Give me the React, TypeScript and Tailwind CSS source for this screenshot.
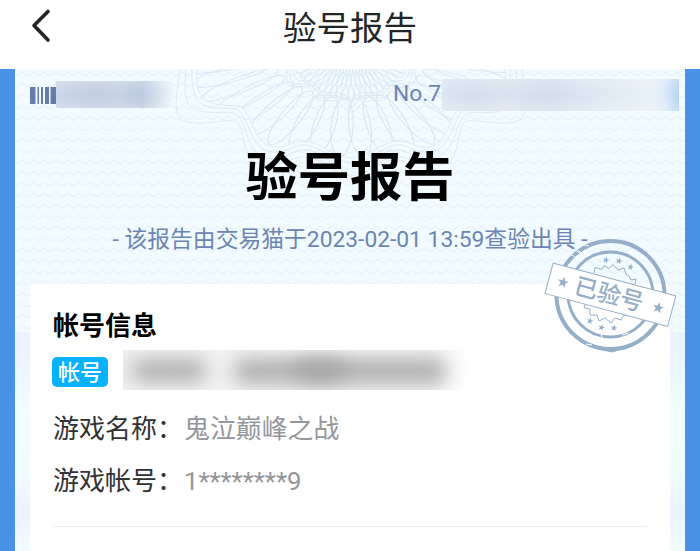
const STAR = "M0 -5 L1.3 -1.6 L4.8 -1.5 L2 0.7 L3 4.1 L0 2.1 L-3 4.1 L-2 0.7 L-4.8 -1.5 L-1.3 -1.6 Z";

const innerPetals = Array.from({ length: 60 }, (_, i) => i * 6);
const outerPetals = Array.from({ length: 45 }, (_, i) => i * 8);

// left half of the border lines, mirrored at x = 351
const borderLines = [
  "M197 69 C195 88 200 98 207 101 C218 107 233 104 241 107 C252 113 254 146 275 147 C288 148 292 140 304 141 C322 142 330 156 351 158",
  "M192 69 C191 92 196 103 207 106 C218 110 230 107 238 110 C249 117 250 150 272 152 C288 154 294 143 306 145 C324 148 330 162 351 163",
  "M186 69 C184 92 184 106 197 110 C211 115 227 110 236 114 C246 120 246 152 266 158 C284 163 294 148 308 150 C324 153 332 168 351 169",
  "M180 69 C178 88 172 110 181 119 C193 128 222 119 235 121 C244 123 242 148 251 160 C270 175 293 154 309 157 C325 160 332 174 351 176",
  "M287 69 C286 80 287 85 294 86 C304 88 309 83 314 94 C319 102 330 96 337 98 C344 99 346 105 351 106",
  "M290 69 C289 78 291 83 298 84 C308 84 311 83 317 92 C322 99 332 93 339 96 C346 98 347 102 351 103",
  "M293 69 C293 76 295 80 302 81 C310 81 314 80 319 89 C325 96 334 91 341 93 C347 95 348 99 351 100",
  "M313 97 C320 104 330 99 336 101 C343 104 344 111 351 112",
];

const Guilloche = () => {
  return (
    <svg className="absolute inset-0" width="670" height="482" viewBox="15 69 670 482" fill="none">
      <defs>
        <pattern id="waves" x="15" y="69" width="11.5" height="11" patternUnits="userSpaceOnUse">
          <path d="M-1 5.5 C1 7 2 7 4 5 C6 2.8 7 3 9 5 C10.5 6.3 11 6.3 12.5 5" stroke="#e3eaf6" strokeWidth="0.9" />
        </pattern>
        <clipPath id="mandala">
          <path d="M197 69 C195 88 200 98 207 101 C218 107 233 104 241 107 C252 113 254 146 275 147 C288 148 292 140 304 141 C322 142 330 156 351 158 C372 156 380 142 398 141 C410 140 414 148 427 147 C448 146 450 113 461 107 C469 104 484 107 495 101 C502 98 507 88 505 69 Z" />
        </clipPath>
      </defs>
      <rect x="15" y="69" width="670" height="263" fill="url(#waves)" />
      <g stroke="#c9dce9" strokeWidth="0.8" opacity="0.65">
        <g clipPath="url(#mandala)">
          <g transform="translate(351 42) scale(1.5 1)">
            {outerPetals.map((a) => (
              <ellipse key={a} cx="0" cy="84" rx="7.5" ry="29" transform={`rotate(${a}) skewX(12)`} />
            ))}
          </g>
          <g transform="translate(351 45) scale(1.15 1)">
            {innerPetals.map((a) => (
              <ellipse key={a} cx="0" cy="30" rx="4" ry="25" transform={`rotate(${a})`} />
            ))}
          </g>
        </g>
        {borderLines.map((d) => (
          <g key={d}>
            <path d={d} />
            <path d={d} transform="translate(702 0) scale(-1 1)" />
          </g>
        ))}
      </g>
    </svg>
  );
};

const Stamp = () => {
  return (
    <svg className="absolute left-[525px] top-[164px]" width="140" height="126" viewBox="540 233 140 126" fill="none">
      <g stroke="#95afc9">
        <circle cx="610.5" cy="295" r="54" strokeWidth="4" />
        <path d="M584 343 Q610 356 638 343 L625 349 L619 350 L612 352 L603 350 L594 348 Z" fill="#95afc9" strokeWidth="1" />
        <circle cx="610.5" cy="294.5" r="42.5" strokeWidth="3" />
        <g strokeWidth="1">
          <path d="M594 273 L595 267.5 L602 269.5 L604 265.5 L609 268.5 L613 264.5 L618 270 L624 268 L626 274 L629 276 L631 280 L636 279 L635 284" />
          <path d="M585 304 L584 308 L590 309 L590 315 L597 315 L599 321 L605 318 L611 323 L615 318 L621 320 L624 315 L627 316" />
        </g>
      </g>
      <g fill="#95afc9">
        {[[606, 260], [619, 261], [630.5, 267], [590, 321], [601.5, 327.5], [614, 328]].map(([x, y]) => (
          <path key={x} d={STAR} transform={`translate(${x} ${y}) rotate(15) scale(0.7)`} />
        ))}
      </g>
      <g stroke="#eff8fd" strokeWidth="1">
        <path d="M570 254 L575 257 M573 249 L580 253 M578 250 L581 253 M584 245 L589 246" />
      </g>
      <g stroke="#fff" strokeWidth="1">
        <path d="M601 334 L603 340 M586 344 L592 345 M622 335 L629 333" />
      </g>
      <g transform="rotate(15 610.5 294.5)">
        <rect x="547" y="279" width="127" height="31.5" fill="#fff" stroke="#95afc9" />
        <path d={STAR} fill="#95afc9" transform="translate(561.5 295) scale(1.15)" />
        <path d={STAR} fill="#95afc9" transform="translate(660 295) scale(1.15)" />
        <text
          x="609"
          y="303"
          textAnchor="middle"
          fill="#95afc9"
          className="font-['Noto_Sans_CJK_SC',sans-serif] text-[23.5px] font-medium"
        >
          已验号
        </text>
      </g>
    </svg>
  );
};

const App = () => {
  return (
    <div className="h-[551px] w-[700px] overflow-hidden bg-white font-[Roboto,'Noto_Sans_CJK_SC',sans-serif]">
      <header className="grid h-[69px] grid-cols-[1fr_auto_1fr] items-start">
        <svg className="ml-7 mt-2" width="26" height="36" viewBox="0 0 26 36" fill="none">
          <path d="M20 3.5 L6 17.5 L20 32" stroke="#222426" strokeWidth="3.6" strokeLinecap="round" strokeLinejoin="round" />
        </svg>
        <h1 className="mt-[5px] text-[33.5px] leading-[48px] text-[#222426]">验号报告</h1>
      </header>

      <div className="h-[482px] bg-[#4a92e8] px-[15px]">
        <div className="relative flex h-full flex-col bg-[#f2fbff]">
          <div className="absolute inset-x-0 bottom-0 h-[219px] bg-[linear-gradient(#eaf2ff,#ebf4ff_12%,#f1fdff_35%,#f1fcff_65%,#ebf2ff_82%,#f2fdff)]" />
          <Guilloche />

          <div className="relative flex h-[42px] items-start pl-[15px]">
            <svg className="mt-[18px]" width="26" height="17" fill="#667cad">
              <rect width="5.5" height="17" />
              <rect x="7.5" width="1.5" height="17" />
              <rect x="11" width="2" height="17" />
              <rect x="15" width="4" height="17" />
              <rect x="20.5" width="5.5" height="17" />
            </svg>
            <div className="mt-3 h-[27px] w-[117px] bg-[linear-gradient(#ffffff33,transparent_40%,transparent_65%,#ffffff33),linear-gradient(90deg,#cad7e8,#c3cfe2_30%,#c5d2e4_55%,#bdcbe1_74%,#d0ddeb_85%,#edf7fc)]" />
            <span className="ml-[220px] mt-2.5 w-[49px] text-[22.8px] leading-[30px] text-[#6d83b1]">No.7</span>
            <div className="mt-2.5 h-8 w-[237px] bg-[linear-gradient(#ffffff33,transparent_45%,transparent_55%,#ffffff33),linear-gradient(90deg,#dce5f0,#d6e0ed_13%,#dbe4ee_28%,#d4dfec_45%,#dee8f1_65%,#e7f0f7_88%,#dcebfa_94%,#b6d1f3)]" />
          </div>

          <div className="relative mt-[29px] text-center text-[52.3px] font-bold leading-[76px] text-black">验号报告</div>
          <p className="relative mt-[7px] whitespace-nowrap text-center text-[22.8px] leading-[34px] text-[#6c84b3]">
            - 该报告由交易猫于2023-02-01 13:59查验出具 -
          </p>

          <section className="relative mx-[15px] mt-[27px] flex-1 rounded-t-sm bg-white px-[23px] pt-6">
            <h2 className="text-[26px] font-bold leading-9 text-black">帐号信息</h2>
            <div className="mt-1.5 flex h-10 items-start">
              <span className="-ml-px mt-[7px] flex h-[30px] w-14 items-center justify-center rounded-[5px] bg-[#05b2ff] text-[22px] font-medium text-white">
                帐号
              </span>
              <div className="relative ml-[15px] h-10 w-[344px] overflow-hidden bg-[linear-gradient(90deg,#eef1f2,#f3f3f3_5%,#f3f3f3_90%,#fff)]">
                <div className="absolute left-2 top-2.5 h-[21px] w-[76px] rounded-full bg-[#a8a8a8] blur-[10px]" />
                <div className="absolute left-[110px] top-2.5 h-[22px] w-[214px] rounded-full bg-[#a6a6a6] blur-[10px]" />
                <div className="absolute left-[172px] top-3 h-[18px] w-[50px] rounded-full bg-[#a2a2a2] blur-[10px]" />
              </div>
            </div>
            <div className="mt-[21px] flex text-[26px] leading-9">
              <span className="w-[131px] whitespace-nowrap text-[#303133]">游戏名称：</span>
              <span className="text-[25.9px] text-[#94969b]">鬼泣巅峰之战</span>
            </div>
            <div className="mt-4 flex text-[26px] leading-9">
              <span className="w-[131px] whitespace-nowrap text-[#303133]">游戏帐号：</span>
              <span className="text-[25.7px] text-[#94969b]">1********9</span>
            </div>
            <div className="mt-[27px] h-px bg-[#ededed]" />
          </section>
          <Stamp />
        </div>
      </div>
    </div>
  );
};

export default App;
